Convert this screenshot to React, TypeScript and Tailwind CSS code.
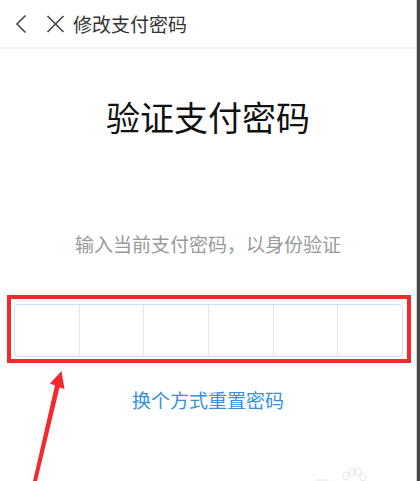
import React from "react";

const cjk = { fontFamily: '"Noto Sans CJK SC", "Noto Sans", sans-serif' };

function BackIcon() {
  return (
    <svg width="12" height="20" viewBox="0 0 12 20" fill="none">
      <path d="M10.5 1.5 2 10l8.5 8.5" stroke="#444" strokeWidth="1.6" />
    </svg>
  );
}

function CloseIcon() {
  return (
    <svg width="19" height="18" viewBox="0 0 19 18" fill="none">
      <path d="M1.5 1 17.5 17M17.5 1 1.5 17" stroke="#444" strokeWidth="1.6" />
    </svg>
  );
}

function App() {
  const cells = [0, 1, 2, 3, 4, 5];

  return (
    <div className="relative flex h-[481px] w-[420px] overflow-hidden bg-white" style={cjk}>
      <div className="flex w-[416px] flex-col">
        {/* Header */}
        <div className="flex h-[49px] items-center border-b-[2px] border-[#f2f2f2] pl-[15px]">
          <BackIcon />
          <span className="ml-[19px]">
            <CloseIcon />
          </span>
          <span className="ml-[8px] text-[19px] leading-none text-[#333]">修改支付密码</span>
        </div>

        {/* Title */}
        <h1 className="mt-[51px] text-center text-[34px] leading-[34px] text-[#111]">验证支付密码</h1>
        <p className="mt-[100px] text-center text-[19px] leading-[19px] text-[#999]">
          输入当前支付密码，以身份验证
        </p>

        {/* Password boxes, with the red annotation frame */}
        <div className="mx-[7px] mt-[42px] w-[404px] border-[4px] border-[#f5282e] pb-[2px] pl-[3px] pr-[4px] pt-[5px]">
          <div className="flex h-[53px] overflow-hidden rounded-[5px] border-[1.5px] border-[#c6e2fa] shadow-[0_0_2px_#dbeeff]">
            {cells.map((i) => (
              <div
                key={i}
                className={i === 0 ? "flex-1" : "flex-1 border-l-[1.5px] border-[#e4e4e4]"}
              />
            ))}
          </div>
        </div>

        <a className="mt-[27px] text-center text-[19px] leading-[19px] text-[#3590de]">换个方式重置密码</a>
      </div>

      {/* Screen edge */}
      <div className="w-px bg-[#cfcfcf]" />
      <div className="w-[3px] bg-[#4a4a4a]" />

      {/* Red arrow annotation */}
      <svg className="absolute left-0 top-0" width="420" height="481" viewBox="0 0 420 481">
        <polygon
          points="61.5,371 64.5,389 59.5,387.5 37,481 33,481 55,385.5 50,383.5"
          fill="#f5282e"
        />
        {/* faint watermark */}
        <g fill="none" stroke="#e6e6e6" strokeWidth="1">
          <ellipse cx="346" cy="476" rx="3" ry="4" />
          <ellipse cx="352" cy="472" rx="3" ry="4" />
          <ellipse cx="358" cy="472" rx="3" ry="4" />
          <ellipse cx="363" cy="477" rx="3" ry="4" />
          <path d="M315 480h14" />
        </g>
      </svg>
    </div>
  );
}

export default App;
